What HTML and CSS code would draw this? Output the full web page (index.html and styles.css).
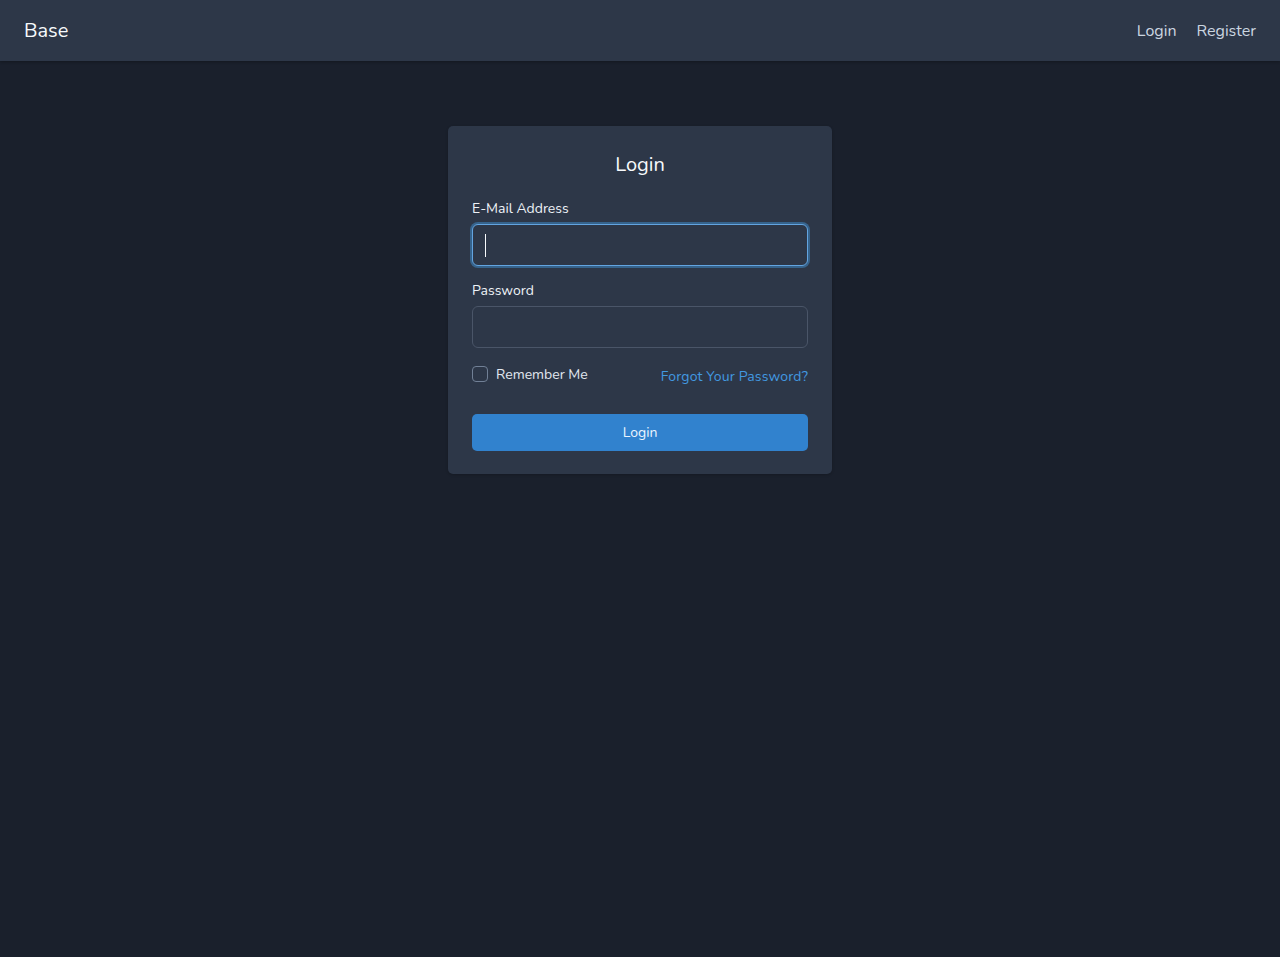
FILE: index.html
```html
<!DOCTYPE html>
<html>
	<head>
		<meta charset="UTF-8"/>
		<title>Base - Login</title>
		<link rel="stylesheet" href="styles.css">
	</head>
	<body>
		<nav class="navbar">
			<a class="brand" href="#">Base</a>
			<div class="nav-links">
				<a href="#">Login</a>
				<a href="#">Register</a>
			</div>
		</nav>
		<main class="page">
			<form class="card">
				<h2 class="card-title">Login</h2>
				<div class="group">
					<label for="email">E-Mail Address</label>
					<div class="input focused" id="email"><span class="caret"></span></div>
				</div>
				<div class="group">
					<label for="password">Password</label>
					<input class="input" id="password" type="password">
				</div>
				<div class="row">
					<label class="check">
						<span class="box"></span>
						Remember Me
					</label>
					<a class="forgot" href="#">Forgot Your Password?</a>
				</div>
				<button class="btn" type="button">Login</button>
			</form>
		</main>
	</body>
</html>
```

FILE: styles.css
```css
* {
	margin: 0;
	padding: 0;
	box-sizing: border-box;
}
html, body {
	height: 100%;
}
body {
	background: #1a202c;
	font-family: "Nunito", "Lato", "Noto Sans", sans-serif;
	font-size: 14px;
	color: #e2e8f0;
}
a {
	text-decoration: none;
}
.navbar {
	height: 61px;
	background: #2d3748;
	display: flex;
	align-items: center;
	justify-content: space-between;
	padding: 0 24px;
	box-shadow: 0 1px 3px rgba(0, 0, 0, 0.3);
}
.brand {
	color: #f7fafc;
	font-size: 20px;
}
.nav-links {
	display: flex;
	gap: 20px;
}
.nav-links a {
	color: #cbd5e0;
	font-size: 16px;
}
.page {
	display: flex;
	justify-content: center;
	padding-top: 65px;
}
.card {
	width: 384px;
	background: #2d3748;
	border-radius: 5px;
	padding: 25px 24px 23px;
	box-shadow: 0 1px 3px rgba(0, 0, 0, 0.2);
}
.card-title {
	font-size: 20px;
	font-weight: normal;
	line-height: 28px;
	text-align: center;
	color: #f7fafc;
	margin-bottom: 20px;
}
.group {
	margin-bottom: 15px;
}
.group label {
	display: block;
	line-height: 20px;
	margin-bottom: 5px;
	color: #edf2f7;
}
.input {
	display: block;
	width: 100%;
	height: 42px;
	background: #2d3748;
	border: 1px solid #4a5568;
	border-radius: 6px;
	color: #edf2f7;
	font: inherit;
	padding: 0 12px;
	outline: none;
}
.input.focused {
	border-color: #63a4e0;
	box-shadow: 0 0 0 2px rgba(66, 153, 225, 0.45);
	display: flex;
	align-items: center;
}
.caret {
	width: 1px;
	height: 23px;
	background: #f7fafc;
}
.row {
	display: flex;
	justify-content: space-between;
	align-items: center;
	margin-top: 16px;
	height: 20px;
}
.check {
	display: flex;
	align-items: center;
	gap: 8px;
	color: #e2e8f0;
}
.box {
	width: 16px;
	height: 16px;
	border: 1px solid #718096;
	border-radius: 4px;
}
.forgot {
	color: #4299e1;
	padding-top: 5px;
	letter-spacing: 0.15px;
}
.btn {
	display: block;
	width: 100%;
	height: 37px;
	margin-top: 30px;
	background: #3182ce;
	color: #ebf4ff;
	border: none;
	border-radius: 5px;
	font: inherit;
}
```
